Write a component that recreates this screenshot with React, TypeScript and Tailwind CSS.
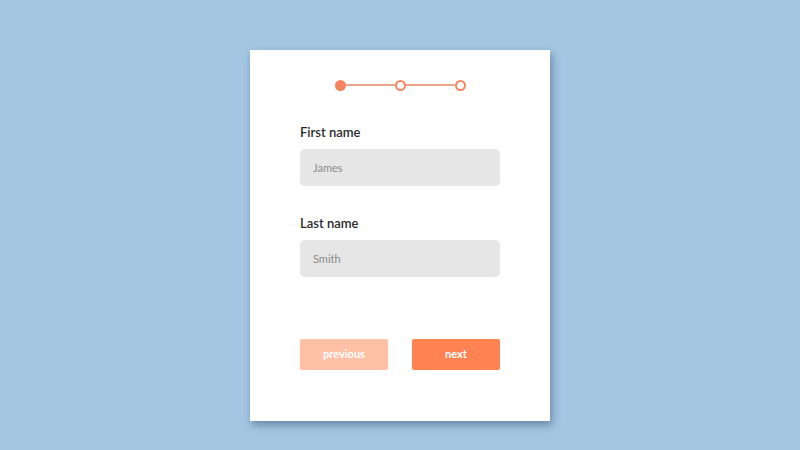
import React from "react";

const Step = ({ active }: { active?: boolean }) => (
    <span
        className={
            active
                ? "block w-[11px] h-[11px] rounded-full bg-[#f4845f] shrink-0"
                : "block w-[11px] h-[11px] rounded-full border-2 border-[#f4845f] bg-white shrink-0"
        }
    />
);

const Field = ({ label, placeholder }: { label: string; placeholder: string }) => (
    <div className="flex flex-col">
        <label className="text-[13px] leading-4 font-semibold text-[#2b2b2b] mb-[9px]">{label}</label>
        <input
            placeholder={placeholder}
            className="w-[200px] h-[37px] rounded-[5px] bg-[#e6e6e6] px-[13px] text-[11px] text-[#555] placeholder:text-[#8a8a8a] outline-none"
        />
    </div>
);

export default function App() {
    return (
        <div className="w-[800px] h-[450px] bg-[#a3c6e3] pt-[50px] font-['Lato','Noto_Sans',sans-serif]">
            <div className="mx-auto w-[300px] h-[371px] bg-white shadow-[2px_4px_8px_rgba(40,60,90,0.45)] pt-[30px] px-[50px] flex flex-col">
                <div className="flex items-center justify-center h-[10px]">
                    <Step active />
                    <span className="block w-[49px] h-[2px] bg-[#eea487]" />
                    <Step />
                    <span className="block w-[49px] h-[2px] bg-[#eea487]" />
                    <Step />
                </div>

                <div className="mt-[34px]">
                    <Field label="First name" placeholder="James" />
                </div>
                <div className="mt-[29px]">
                    <Field label="Last name" placeholder="Smith" />
                </div>

                <div className="mt-[62px] flex justify-between">
                    <button className="w-[88px] h-[31px] rounded-[2px] bg-[#ffc0a6] text-white text-[11px] font-bold">
                        previous
                    </button>
                    <button className="w-[88px] h-[31px] rounded-[2px] bg-[#ff8352] text-white text-[11px] font-bold">
                        next
                    </button>
                </div>
            </div>
        </div>
    );
}
